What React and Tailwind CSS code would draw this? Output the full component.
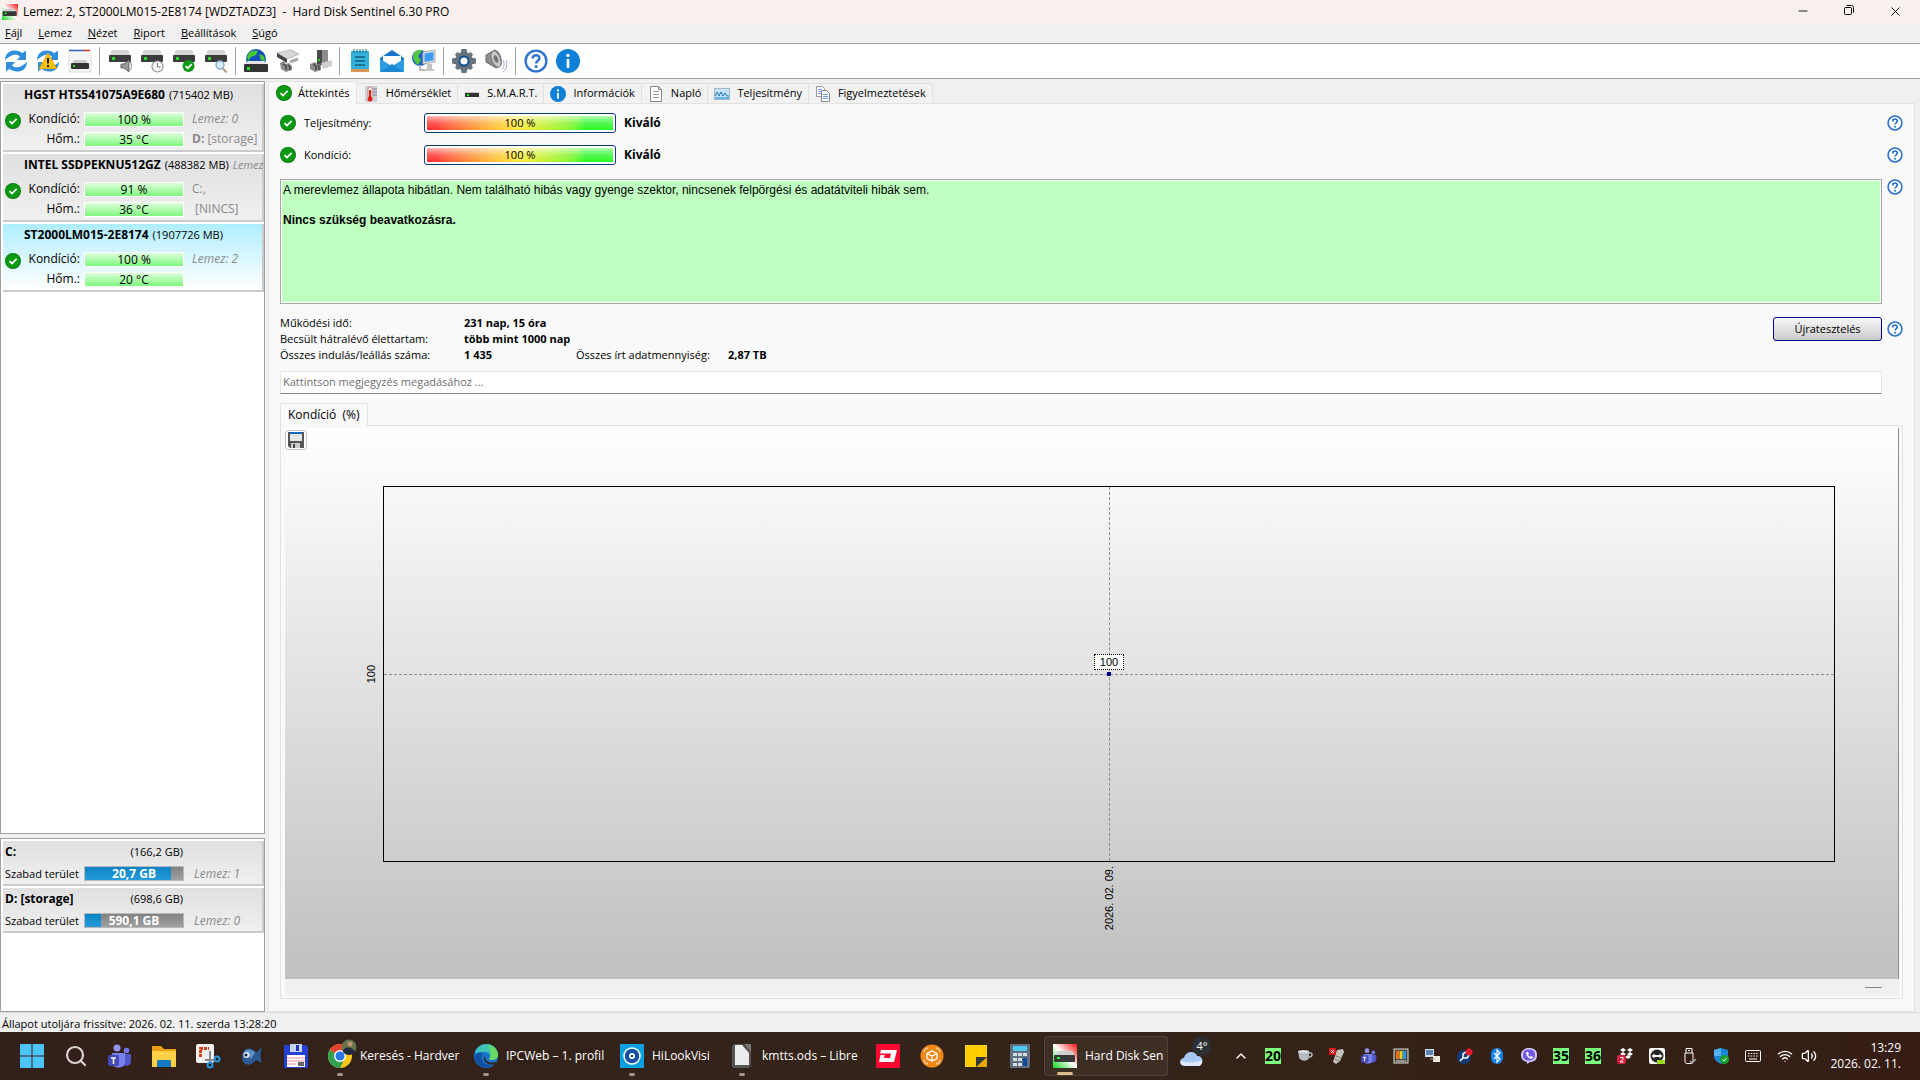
import { ChevronUp, Minus, Search, Volume2, Wifi, X } from "lucide-react";

const disks = [
  {
    name: "HGST HTS541075A9E680",
    size: "(715402 MB)",
    health: "100 %",
    temp: "35 °C",
    note: "Lemez: 0",
    letter: "D:",
    label: "[storage]",
  },
  {
    name: "INTEL SSDPEKNU512GZ",
    size: "(488382 MB)",
    extra: "Lemez",
    health: "91 %",
    temp: "36 °C",
    drive: "C:,",
    label: " [NINCS]",
  },
  {
    name: "ST2000LM015-2E8174",
    size: "(1907726 MB)",
    health: "100 %",
    temp: "20 °C",
    note: "Lemez: 2",
    selected: true,
  },
];

const partitions = [
  { name: "C:", size: "(166,2 GB)", free: "20,7 GB", used: 88, note: "Lemez: 1" },
  { name: "D: [storage]", size: "(698,6 GB)", free: "590,1 GB", used: 16, note: "Lemez: 0" },
];

const menu = ["Fájl", "Lemez", "Nézet", "Riport", "Beállítások", "Súgó"];

/* ---------- icons ---------- */

const AppIcon = ({ className }) => (
  <svg viewBox="0 0 24 24" className={className}>
    <defs>
      <linearGradient id="appBg" x1="1" y1="0" x2="0" y2="1">
        <stop offset="0" stopColor="#ff1010" />
        <stop offset=".5" stopColor="#fff" />
        <stop offset="1" stopColor="#10d820" />
      </linearGradient>
    </defs>
    <rect width="24" height="24" fill="url(#appBg)" />
    <path d="M5 7h14l3 5H2z" fill="#d0d0d0" />
    <rect x="1" y="11" width="21" height="7" rx="1" fill="#383838" />
    <rect x="4" y="13" width="3" height="2" fill="#2f2" />
  </svg>
);

const CheckIcon = () => (
  <svg viewBox="0 0 16 16" className="size-4 shrink-0">
    <circle cx="8" cy="8" r="8" fill="#067a0c" />
    <circle cx="8" cy="8" r="7" fill="#0c9a12" />
    <path d="M4.500 8.200l2.500 2.300 4.600-4.600" fill="none" stroke="#fff" strokeWidth="1.700" />
  </svg>
);

const HelpIcon = ({ className = "size-4" }) => (
  <svg viewBox="0 0 24 24" className={className} fill="none" stroke="#2f72d0">
    <circle cx="12" cy="12" r="10.400" strokeWidth="2.400" fill="#fff" />
    <path d="M8.600 9.600c0-4.600 7-4.400 6.800-.4-.1 2.600-3.300 2.500-3.300 5.200" strokeWidth="2.500" />
    <circle cx="12.100" cy="17.600" r="1.500" fill="#2f72d0" stroke="none" />
  </svg>
);

const InfoIcon = ({ className = "size-4" }) => (
  <svg viewBox="0 0 24 24" className={className}>
    <circle cx="12" cy="12" r="12" fill="#0f80d8" />
    <circle cx="12" cy="6.500" r="1.700" fill="#fff" />
    <path d="M12 10v9" stroke="#fff" strokeWidth="2.600" />
  </svg>
);

const Arrows = () => (
  <g fill="#2f8fdc">
    <path d="M1 11C1.500 4 5.500 1.500 11 1.500c3 0 5.500 1 7.300 2.800L22 1.500V11h-9l3-3.400C14.500 6 12.500 5.500 10.500 5.800 7 6.200 4.500 8 1 11z" />
    <path d="M23 13c-.5 7-4.500 9.500-10 9.500-3 0-5.500-1-7.300-2.800L2 22.500V13h9l-3 3.400c1.500 1.600 3.500 2.100 5.500 1.800 3.500-.4 6-2.200 9.500-5.200z" />
  </g>
);

const Disk = () => (
  <g>
    <path d="M4 1h16l3 6H1z" fill="#d4d4d4" />
    <rect x="1" y="6" width="22" height="7" rx="1" fill="#3c3c3c" />
    <rect x="4" y="8" width="3" height="3" fill="#22e022" />
  </g>
);

const toolbar = [
  [
    { title: "Frissítés", art: <Arrows /> },
    {
      title: "Figyelmeztetés",
      art: (
        <>
          <Arrows />
          <path d="M12 4l8.500 15.500h-17z" fill="#ffc20a" stroke="#f0a800" strokeLinejoin="round" />
          <path d="M12 9v5.500" stroke="#222" strokeWidth="2" />
          <circle cx="12" cy="17" r="1.200" fill="#222" />
        </>
      ),
    },
    {
      title: "Jelentés",
      art: (
        <>
          <rect x="1" y="1" width="22" height="22" fill="#f4f4f4" stroke="#e0e0e0" />
          <path d="M1 1.500h14" stroke="#2f6fb8" strokeWidth="1.500" />
          <path d="M15 1.500h7" stroke="#c8402c" strokeWidth="1.500" />
          <path d="M6 11h12l2 4H4z" fill="#c8c8c8" />
          <rect x="3" y="14" width="18" height="6" rx="1" fill="#333" />
          <rect x="5" y="16" width="2" height="2" fill="#2e2" />
        </>
      ),
    },
  ],
  [
    {
      title: "Hangteszt",
      art: (
        <>
          <Disk />
          <path d="M13 15h3l5-4v12l-5-4h-3z" fill="#9a9a9a" stroke="#666" />
          <path d="M22.500 13c1.500 3 1 6 0 8" fill="none" stroke="#8c8c8c" />
        </>
      ),
    },
    {
      title: "Ütemezés",
      art: (
        <>
          <Disk />
          <circle cx="17.500" cy="17.500" r="5.500" fill="#f6f6f6" stroke="#999" strokeWidth="1.200" />
          <path d="M17.500 14v4h3" fill="none" stroke="#777" />
        </>
      ),
    },
    {
      title: "Teszt",
      art: (
        <>
          <Disk />
          <circle cx="16.500" cy="17" r="6" fill="#0f9a18" />
          <path d="M13.500 17l2.300 2.200 4-4" fill="none" stroke="#fff" strokeWidth="1.700" />
        </>
      ),
    },
    {
      title: "Keresés",
      art: (
        <>
          <Disk />
          <path d="M18.500 19l4 4.500" stroke="#b89878" strokeWidth="2" />
          <circle cx="16" cy="16" r="4" fill="#d8eefc" stroke="#8ab0cc" strokeWidth="1.500" />
        </>
      ),
    },
  ],
  [
    {
      title: "Hálózat",
      art: (
        <>
          <circle cx="12" cy="10" r="10" fill="#1450b8" />
          <path d="M5 4c3-3 7-3 9-2l-2 4-5 2-3 4c-1-3-1-6 1-8zM15 5l5 2 1 5-4-1z" fill="#46c832" />
          <path d="M4 12h16l4 4H0z" fill="#e4e4e4" />
          <rect y="15" width="24" height="8" rx="1" fill="#333" />
          <rect x="3" y="18" width="3" height="3" fill="#2e2" />
        </>
      ),
    },
    {
      title: "Csatlakoztatás",
      art: (
        <>
          <path d="M1 4l14-3 8 4-12 5z" fill="#d8d8d8" stroke="#b4b4b4" />
          <path d="M1 4l10 6v4L1 8z" fill="#444" />
          <path d="M14 13l8-3" stroke="#aaa" strokeWidth="3" />
          <path d="M4 14l4-2 2 3 3-1 3 3v4l-6 2-5-3z" fill="#8c8c8c" />
          <path d="M7 15l3 2v4M12 16l2 2v3" fill="none" stroke="#444" strokeWidth="1.500" />
        </>
      ),
    },
    {
      title: "Leválasztás",
      art: (
        <>
          <path d="M9 1h9l2 2v13H9z" fill="#4a4a4a" />
          <path d="M14 1h6v14h-6z" fill="#8c8c8c" />
          <path d="M13 14l11-3v6l-9 3z" fill="#cecece" />
          <path d="M2 15l5-2 3 2 3 1v5l-6 2-5-3z" fill="#8c8c8c" />
          <path d="M5 15l3 2v4M10 16l1 2v3" fill="none" stroke="#444" strokeWidth="1.500" />
          <rect x="10" y="10" width="2" height="2" fill="#2d2" />
        </>
      ),
    },
  ],
  [
    {
      title: "Napló",
      art: (
        <>
          <rect x="3" y="2" width="18" height="19" fill="#35b2dc" />
          <rect x="3" y="20" width="18" height="3" fill="#d8965a" />
          <path d="M6 0v4m3-4v4m3-4v4m3-4v4m3-4v4" stroke="#1c6484" />
          <path d="M7 8h10M7 12h10M7 16h10" stroke="#14607e" strokeWidth="1.500" />
        </>
      ),
    },
    {
      title: "E-mail",
      art: (
        <>
          <path d="M0 9l12-8 12 8v14H0z" fill="#1678c8" />
          <path d="M3 7h18v7l-9 5-9-5z" fill="#fff" />
          <path d="M0 10l12 7 12-7v13H0z" fill="#2b9be4" />
          <path d="M0 23l12-8 12 8z" fill="#1c86d4" />
        </>
      ),
    },
    {
      title: "Távoli gép",
      art: (
        <>
          <circle cx="8" cy="9" r="8" fill="#2060c8" />
          <path d="M2 4c3-4 7-4 8-2L6 7l3 4-3 5C1 12 0 8 2 4z" fill="#54c83c" />
          <path d="M11 3l12-2v12l-12 2z" fill="#e2e2e2" stroke="#aaa" />
          <path d="M12.500 4.500l9-1.500v8.500l-9 1.500z" fill="#3c9cf0" />
          <path d="M15 15h5v4l3 3H12l3-3z" fill="#c4c4c4" />
          <path d="M8 16v5h5" fill="none" stroke="#b8b8b8" strokeWidth="2" />
        </>
      ),
    },
  ],
  [
    {
      title: "Beállítások",
      art: (
        <>
          <g fill="#66727e">
            <circle cx="12" cy="12" r="9" />
            <path d="M9.500 0h5l1 5h-7zM9.500 24h5l1-5h-7zM0 9.500v5l5 1v-7zM24 9.500v5l-5 1v-7z" />
            <path d="M3 5.500L5.500 3l4 2.500-4 4zM21 5.500L18.500 3l-4 2.500 4 4zM3 18.500L5.500 21l4-2.500-4-4zM21 18.500L18.500 21l-4-2.500 4-4z" />
          </g>
          <circle cx="12" cy="12" r="5.500" fill="#0e4c8c" />
          <circle cx="12" cy="12" r="3.600" fill="#fff" />
        </>
      ),
    },
    {
      title: "Hang",
      art: (
        <>
          <path d="M2 6L11 1c5 2 7 9 6 15l-5 3-10-6z" fill="#8e8e8e" stroke="#666" />
          <ellipse cx="12" cy="10" rx="4.500" ry="8.500" transform="rotate(-20 12 10)" fill="#c8c8c8" stroke="#777" />
          <ellipse cx="12" cy="10" rx="2" ry="4" transform="rotate(-20 12 10)" fill="#777" />
          <path d="M19 11c2 4 1 7-1 9M22 11c2 5 0 10-3 12" fill="none" stroke="#a8a8d0" />
        </>
      ),
    },
  ],
];

const ToolIcon = ({ children }) => (
  <svg viewBox="0 0 24 24" className="size-6">
    {children}
  </svg>
);

const TabIcon = ({ children }) => (
  <svg viewBox="0 0 16 16" className="size-4 shrink-0">
    {children}
  </svg>
);

const tabs = [
  {
    label: "Hőmérséklet",
    icon: (
      <TabIcon>
        <rect x="2" width="12" height="16" fill="#ccd2d8" />
        <path d="M10 3h4M10 6h4M10 9h4" stroke="#778" />
        <rect x="5" y="1" width="4" height="11" rx="2" fill="#fff" stroke="#c88" />
        <path d="M7 4v9" stroke="#e02010" strokeWidth="2" />
        <circle cx="7" cy="13" r="2.500" fill="#e02010" />
      </TabIcon>
    ),
  },
  {
    label: "S.M.A.R.T.",
    icon: (
      <TabIcon>
        <path d="M2 6h12l1 1H1z" fill="#c4c4c4" />
        <rect x="1" y="7" width="14" height="4" fill="#333" />
        <rect x="3" y="8" width="2" height="2" fill="#2e2" />
      </TabIcon>
    ),
  },
  { label: "Információk", icon: <InfoIcon /> },
  {
    label: "Napló",
    icon: (
      <TabIcon>
        <path d="M2.500.5h8l3 3v12h-11z" fill="#fff" stroke="#888" />
        <path d="M10.500.5v3h3" fill="none" stroke="#888" />
        <path d="M5 5.500h6M5 8.500h6M5 11.500h6" stroke="#999" />
      </TabIcon>
    ),
  },
  {
    label: "Teljesítmény",
    icon: (
      <TabIcon>
        <rect x=".5" y="2.500" width="15" height="11" fill="#c4e4fa" stroke="#a4b8c8" />
        <path d="M1 11h14v2H1z" fill="#68b4ec" />
        <path d="M1 10l2-4 2 4 2-4 2 4 2-3 2 3h2" fill="none" stroke="#2478c0" />
      </TabIcon>
    ),
  },
  {
    label: "Figyelmeztetések",
    icon: (
      <TabIcon>
        <path d="M1.500.5h6l2 2v8h-8z" fill="#fff" stroke="#999" />
        <path d="M3 3.500h4M3 5.500h4M3 7.500h4" stroke="#6ca0e8" />
        <path d="M6.500 4.500h5l3 3v8h-8z" fill="#fff" stroke="#888" />
        <path d="M8 8.500h5M8 10.500h5M8 12.500h5" stroke="#6ca0e8" />
      </TabIcon>
    ),
  },
];

/* ---------- left column ---------- */

const GreenBar = ({ children }) => (
  <div className="w-[100px] h-[15px] border border-white bg-linear-to-b from-[#dcffdc] to-[#7cf77c] text-center leading-[13px]">
    {children}
  </div>
);

const DiskCard = ({ disk }) => (
  <button
    className={
      "block w-full h-[68px] pt-[2px] text-left border-r-2 border-b-2 border-[#cbcbcb] " +
      (disk.selected
        ? "bg-linear-to-b from-[#aeeeff] to-white"
        : "bg-linear-to-b from-[#e0e0e0] to-[#f0f0f0]")
    }
  >
    <div className="flex items-center gap-1 pl-[21px] h-4 leading-4 whitespace-nowrap text-[11px]">
      <b className="text-xs">{disk.name}</b>
      <span>{disk.size}</span>
      {disk.extra && <i className="text-[#8a8a8a]">{disk.extra}</i>}
    </div>
    <div className="flex pt-[6px]">
      <div className="w-6 pl-[2px] pt-1">
        <CheckIcon />
      </div>
      <div className="grid grid-cols-[53px_100px_auto] gap-x-1 leading-5 whitespace-nowrap items-center">
        <span className="text-right">Kondíció:</span>
        <GreenBar>{disk.health}</GreenBar>
        <span className="pl-1 text-[#8a8a8a]">
          {disk.note ? <i>{disk.note}</i> : disk.drive}
        </span>
        <span className="text-right">Hőm.:</span>
        <GreenBar>{disk.temp}</GreenBar>
        <span className="pl-1 text-[#8a8a8a] whitespace-pre">
          {disk.letter && <b>{disk.letter} </b>}
          {disk.label}
        </span>
      </div>
    </div>
  </button>
);

const PartitionCard = ({ part }) => (
  <button className="block w-full h-[45px] pl-[2px] text-left border-r-2 border-b-2 border-[#cbcbcb] bg-linear-to-b from-[#e0e0e0] to-[#f0f0f0]">
    <div className="flex justify-between w-[178px] h-[22px] leading-[22px]">
      <b>{part.name}</b>
      <span className="text-[11px]">{part.size}</span>
    </div>
    <div className="flex items-center h-[21px] leading-5 whitespace-nowrap">
      <span className="w-[79px] text-[11px]">Szabad terület</span>
      <div className="relative w-[100px] h-[15px] border border-[#b8b8b8] bg-linear-to-b from-[#828282] to-[#a0a0a0]">
        <div
          className="h-full bg-linear-to-b from-[#0a84c4] to-[#249cdc]"
          style={{ width: part.used + "%" }}
        />
        <b className="absolute inset-0 text-center text-white leading-[13px]">{part.free}</b>
      </div>
      <i className="pl-[10px] text-[#8a8a8a]">{part.note}</i>
    </div>
  </button>
);

const Sidebar = () => (
  <aside className="flex flex-col gap-1 w-[265px] shrink-0 pt-[2px]">
    <div className="flex flex-col flex-1 gap-[2px] p-[2px] pr-0 bg-white border border-[#a0a0a0]">
      {disks.map((disk) => (
        <DiskCard key={disk.name} disk={disk} />
      ))}
    </div>
    <div className="flex flex-col gap-[2px] h-[174px] p-[2px] pr-0 bg-white border border-[#a0a0a0]">
      {partitions.map((part) => (
        <PartitionCard key={part.name} part={part} />
      ))}
    </div>
  </aside>
);

/* ---------- main panel ---------- */

const Meter = ({ label }) => (
  <div className="flex items-center h-8">
    <CheckIcon />
    <span className="w-32 pl-2">{label}</span>
    <div className="w-48 h-5 p-[2px] bg-white border border-[#0a3a78] rounded-[3px]">
      <div className="h-full bg-linear-to-r from-[#ff3030] from-5% via-[#ffe838] via-48% to-[#28f828] to-85%">
        <div className="h-full text-center leading-[14px] bg-linear-to-b from-white/65 via-white/20 to-transparent">
          100 %
        </div>
      </div>
    </div>
    <b className="pl-2 text-xs">Kiváló</b>
    <button aria-label="Súgó" className="ml-auto">
      <HelpIcon />
    </button>
  </div>
);

const HealthChart = () => (
  <div className="flex flex-col flex-1 font-['Liberation_Sans',Arial,sans-serif] bg-linear-to-b from-white to-[#c0c0c0] border-r border-[#8c8c8c]">
    <div className="h-[58px] pt-[2px]">
      <button
        aria-label="Mentés"
        className="flex items-center justify-center w-[22px] h-5 bg-white border border-[#c4c4c4] rounded-[3px]"
      >
        <svg viewBox="0 0 16 16" className="size-4">
          <path d="M0 0h16v16H2l-2-2z" fill="#555" />
          <rect x="2" width="12" height="2" fill="#0a68c0" />
          <rect x="2" y="2" width="12" height="7" fill="#e4e4e4" />
          <rect x="3" y="11" width="9" height="5" fill="#ccc" />
          <rect x="5" y="12" width="2" height="4" fill="#444" />
        </svg>
      </button>
    </div>
    <div className="flex flex-1 pr-[63px]">
      <div className="flex items-center justify-end w-[98px] pr-1">
        <span className="[writing-mode:vertical-rl] rotate-180">100</span>
      </div>
      <div className="relative flex-1 border border-black">
        <div className="absolute inset-x-0 top-1/2 border-t border-dashed border-[#8c8c8c]" />
        <div className="absolute inset-y-0 left-1/2 border-l border-dashed border-[#8c8c8c]" />
        <div className="absolute size-1 -translate-x-1/2 -translate-y-1/2 bg-[#000080] top-1/2 left-1/2" />
        <div className="absolute w-[30px] h-4 mb-1 text-center leading-[14px] -translate-x-1/2 bg-white border border-black border-dotted bottom-1/2 left-1/2">
          100
        </div>
      </div>
    </div>
    <div className="flex justify-center h-[117px] pl-[98px] pr-[63px] pt-1">
      <span className="[writing-mode:vertical-rl] rotate-180 self-start">2026. 02. 09.</span>
    </div>
  </div>
);

const Overview = () => (
  <section className="flex flex-col flex-1 pt-[3px] pb-3 px-[11px] text-[11px] bg-[#f9f9f9] border border-[#e2e2e2]">
    <div>
      <Meter label="Teljesítmény:" />
      <Meter label="Kondíció:" />
    </div>
    <div className="flex items-start gap-[5px] pt-2">
      <div className="flex-1 h-[125px] p-[2px] text-xs leading-[15px] font-['Liberation_Sans',Arial,sans-serif] bg-[#bfffbf] border border-[#a6a6a6] outline-1 -outline-offset-2 outline-white">
        <p className="pt-px">
          A merevlemez állapota hibátlan. Nem található hibás vagy gyenge szektor, nincsenek
          felpörgési és adatátviteli hibák sem.
        </p>
        <p className="pt-[15px] font-bold">Nincs szükség beavatkozásra.</p>
      </div>
      <button aria-label="Súgó">
        <HelpIcon />
      </button>
    </div>
    <div className="flex items-start pt-[11px]">
      <dl className="grid grid-cols-[184px_112px_152px_auto] leading-4 whitespace-nowrap">
        <dt>Működési idő:</dt>
        <dd className="col-span-3 font-bold">231 nap, 15 óra</dd>
        <dt>Becsült hátralévő élettartam:</dt>
        <dd className="col-span-3 font-bold">több mint 1000 nap</dd>
        <dt>Összes indulás/leállás száma:</dt>
        <dd className="font-bold">1 435</dd>
        <dt>Összes írt adatmennyiség:</dt>
        <dd className="font-bold">2,87 TB</dd>
      </dl>
      <div className="flex items-center gap-[5px] ml-auto pt-[2px]">
        <button className="w-[109px] h-6 bg-linear-to-b from-[#f8f8f8] to-[#cacaca] border border-[#000080] rounded-[3px]">
          Újratesztelés
        </button>
        <button aria-label="Súgó">
          <HelpIcon />
        </button>
      </div>
    </div>
    <div className="pr-[21px] pt-2">
      <input
        aria-label="Megjegyzés"
        placeholder="Kattintson megjegyzés megadásához ..."
        className="block w-full h-[23px] px-[2px] pb-[2px] bg-white border border-[#e6e6e6] border-b-[#868686] placeholder:text-[#6e6e6e]"
      />
    </div>
    <div className="pt-[9px]">
      <button className="relative z-10 block h-[23px] px-[7px] -mb-px text-xs whitespace-pre bg-[#f9f9f9] border border-b-0 border-[#e2e2e2]">
        Kondíció  (%)
      </button>
    </div>
    <div className="flex flex-col flex-1 pl-1 pr-[3px] py-[2px] border border-[#e2e2e2]">
      <HealthChart />
      <div className="flex items-center justify-end h-[17px] pr-[17px] bg-[#f0f0f0]">
        <div className="w-[17px] h-px bg-[#868686]" />
      </div>
    </div>
  </section>
);

/* ---------- taskbar ---------- */

const TeamsArt = () => (
  <>
    <circle cx="9" cy="4" r="3.500" fill="#9098f8" />
    <circle cx="18.500" cy="6.500" r="2.800" fill="#7078e8" />
    <path d="M13 10h10v7c0 6-8 6-9 2z" fill="#5058c8" />
    <path d="M4 9h13v10c0 6-13 6-13 0z" fill="#7880f0" />
    <rect y="11" width="11" height="11" rx="2" fill="#4648b4" />
    <path d="M3 14h5M5.500 14v6" stroke="#fff" strokeWidth="1.500" />
  </>
);

const apps = [
  {
    name: "Start",
    art: (
      <path d="M0 0h11.500v11.500H0zM12.500 0H24v11.500H12.500zM0 12.500h11.500V24H0zM12.500 12.500H24V24H12.500z" fill="#4cc4fa" />
    ),
  },
  {
    name: "Keresés",
    art: <Search size={24} color="#dcd4d0" strokeWidth={2.2} />,
  },
  { name: "Teams", art: <TeamsArt /> },
  {
    name: "Fájlkezelő",
    art: (
      <>
        <path d="M0 2h9l3 3h12v18H0z" fill="#e8a010" />
        <path d="M0 7h24v16H0z" fill="#ffd048" />
        <path d="M5 23v-5c0-2 1-2 2-2h10c1 0 2 0 2 2v5z" fill="#1478c0" />
      </>
    ),
  },
  {
    name: "Képmetsző",
    art: (
      <>
        <rect width="18" height="19" rx="2" fill="#f0f0f0" />
        <path d="M4.500 13V4.500H13" fill="none" stroke="#d83c10" strokeWidth="3" strokeDasharray="3 1" />
        <path d="M14 7v11M9 16h9" stroke="#888" strokeWidth="2" />
        <circle cx="14" cy="21" r="2.500" fill="none" stroke="#2498e0" strokeWidth="2" />
        <circle cx="21" cy="15" r="2.500" fill="none" stroke="#2498e0" strokeWidth="2" />
      </>
    ),
  },
  {
    name: "Hal",
    art: (
      <>
        <path d="M2 13c0-10 10-11 14-4l6-6c-2 6-2 10 0 16l-6-3C10 24 2 21 2 13z" fill="#2c5a94" />
        <path d="M4 8c3-4 9-3 11 1l-4 6z" fill="#5a90c4" />
        <circle cx="6.500" cy="11" r="3" fill="#e4eef4" />
        <circle cx="6" cy="11" r="1.500" fill="#123" />
      </>
    ),
  },
  {
    name: "Lemezkezelő",
    art: (
      <>
        <path d="M0 1h22l2 2v21H0z" fill="#2440d0" />
        <rect x="6" width="12" height="8" fill="#c4d4f0" />
        <rect x="12" y="1" width="3" height="6" fill="#2038b0" />
        <rect x="3" y="11" width="18" height="12" fill="#fff" />
        <path d="M3 14h18M3 17h18M3 20h9" stroke="#e89090" />
        <path d="M14 18h6v4h-6z" fill="#666" />
      </>
    ),
  },
  {
    name: "Chrome",
    label: "Keresés - Hardver",
    art: (
      <>
        <circle cx="12" cy="12" r="12" fill="#fcc818" />
        <path d="M12 12L1.600 6A12 12 0 0 1 22.400 6z" fill="#e84030" />
        <path d="M12 12L1.600 6A12 12 0 0 0 12 24l4-8z" fill="#30a050" />
        <circle cx="12" cy="12" r="6" fill="#fff" />
        <circle cx="12" cy="12" r="4.600" fill="#2878e8" />
        <circle cx="21" cy="3" r="7.500" fill="#66744c" />
        <circle cx="22" cy="0" r="2.500" fill="#c49474" />
        <path d="M15 8c0-6 10-6 12 0-3 4-9 4-12 0z" fill="#20283c" />
      </>
    ),
  },
  {
    name: "Edge",
    label: "IPCWeb – 1. profil",
    art: (
      <>
        <circle cx="12" cy="12" r="12" fill="#1874cc" />
        <path d="M1 9C4-3 22-3 24 10c0 6-6 7-9 5 3-4-1-8-6-7-4 0-7 1-8 1z" fill="#3cc4b8" />
        <path d="M14 1c6 1 10 5 10 10 0 5-6 6-9 4 3-4 2-8-1-14z" fill="#68d860" />
        <path d="M9 9c-4 5 0 13 9 12-8 6-17 0-17-8 0-3 4-5 8-4z" fill="#1050a0" />
        <path d="M11 11c-1 6 4 9 11 7l1 2c-8 3-16-3-12-9z" fill="#33241a" />
      </>
    ),
  },
  {
    name: "HiLook",
    label: "HiLookVisi",
    narrow: true,
    art: (
      <>
        <rect width="24" height="24" fill="#0ca0e0" />
        <circle cx="12" cy="12" r="8" fill="#1850a0" stroke="#fff" strokeWidth="1.500" />
        <circle cx="12" cy="12" r="3" fill="#fff" />
        <circle cx="12" cy="12" r="1.300" fill="#1850a0" />
      </>
    ),
  },
  {
    name: "LibreOffice",
    label: "kmtts.ods – Libre",
    art: (
      <>
        <path d="M4 0h9l8 8v13l-2 3H4l-2-2V2z" fill="#555" />
        <path d="M5 1h7l7 8v12H5z" fill="#ececec" />
        <path d="M14 0h7v8z" fill="#777" />
      </>
    ),
  },
  {
    name: "DriveThrough",
    art: (
      <>
        <rect width="24" height="24" fill="#fa0830" />
        <path d="M5 6h16l-3 12H3l1.500-7h4L8 14h6l1-4.500H4z" fill="#fff" />
      </>
    ),
  },
  {
    name: "Csomag",
    art: (
      <>
        <circle cx="12" cy="12" r="11.500" fill="#f08818" />
        <path d="M12 7l5 2.500v5L12 17l-5-2.500v-5zM7 9.500l5 2.500 5-2.500M12 12v5" fill="none" stroke="#fff" strokeWidth="1.300" />
        <path d="M4 8c0-2 2-4 4-4M16 4c2 0 4 2 4 4M4 16c0 2 2 4 4 4M16 20c2 0 4-2 4-4" fill="none" stroke="#fff" />
      </>
    ),
  },
  {
    name: "Jegyzetek",
    art: (
      <>
        <path d="M1 1h22v12L12 23H1z" fill="#ffd000" />
        <path d="M12 13h11v10H12z" fill="#e0a800" />
        <path d="M12 13h11L12 23z" fill="#303840" />
      </>
    ),
  },
  {
    name: "Számológép",
    art: (
      <>
        <rect x="2" width="20" height="24" rx="1" fill="#607080" />
        <rect x="5" y="2" width="14" height="5" fill="#50c8f0" />
        <path d="M5 10.500h14M5 15.500h9M5 20.500h9" stroke="#d4dce4" strokeWidth="3" strokeDasharray="4 1" />
        <rect x="15" y="14" width="4" height="8" fill="#1048a0" />
      </>
    ),
  },
];

const appWidth = (app) => {
  if (!app.label) return "w-11";
  return app.narrow ? "w-[110px]" : "w-[146px]";
};

const NumberTile = ({ children }) => (
  <b className="w-4 h-4 text-sm leading-4 text-center text-black bg-[#7cff7c]">{children}</b>
);

const TrayIcon = ({ children }) => (
  <svg viewBox="0 0 16 16" className="size-4">
    {children}
  </svg>
);

const tray = [
  <ChevronUp size={16} color="#fff" />,
  <NumberTile>20</NumberTile>,
  <TrayIcon>
    <path d="M1 3h11v6c0 5-9 5-10 0z" fill="#b4bac0" />
    <path d="M12 5c4-1 4 4 0 4" fill="none" stroke="#b4bac0" strokeWidth="1.500" />
    <ellipse cx="6.500" cy="3.500" rx="5.500" ry="1.500" fill="#dce0e4" />
  </TrayIcon>,
  <TrayIcon>
    <path d="M8 2l6-1 1 3-4 9-4 3-3-2 2-6z" fill="#c4c4bc" />
    <path d="M7 8l5 2M6 11l4 2" stroke="#777" />
    <rect width="7" height="7" fill="#d81c18" />
    <path d="M2 2l3 3m0-3L2 5" stroke="#fff" />
  </TrayIcon>,
  <svg viewBox="0 0 24 24" className="size-4">
    <TeamsArt />
  </svg>,
  <TrayIcon>
    <rect x="1" y="1" width="14" height="14" fill="#484848" stroke="#e4e0d0" />
    <path d="M4.500 3v8" stroke="#f06818" strokeWidth="3" />
    <path d="M8 3v8" stroke="#e8d020" strokeWidth="3" />
    <path d="M11.500 3v8" stroke="#2898e0" strokeWidth="3" />
    <path d="M3 13h10" stroke="#ddd" />
  </TrayIcon>,
  <TrayIcon>
    <rect x="0" y="1" width="9" height="8" fill="#d4dce4" />
    <rect x="1" y="2" width="7" height="5" fill="#5c84b8" />
    <path d="M8 8h7v6H8z" fill="#ece8dc" />
    <path d="M5 11h5" stroke="#aaa" />
  </TrayIcon>,
  <TrayIcon>
    <circle cx="7" cy="9" r="7" fill="#123c78" />
    <path d="M3 13l3-3 4 0 2-3-3-3-3 2v4" fill="none" stroke="#fff" strokeWidth="1.500" />
    <circle cx="12" cy="4" r="3.500" fill="#e01c28" />
  </TrayIcon>,
  <TrayIcon>
    <rect x="2" width="12" height="16" rx="6" fill="#1480e8" />
    <path d="M5 5l6 6-3 3V2l3 3-6 6" fill="none" stroke="#fff" strokeWidth="1.200" />
  </TrayIcon>,
  <TrayIcon>
    <path d="M8 0c5 0 8 2 8 7s-3 7-7 7l-3 2v-2C2 13 0 11 0 7s3-7 8-7z" fill="#d4ccff" />
    <path d="M8 1.500c4 0 6 2 6 5.500s-2 5.500-6 5.500S2 11 2 7s2-5.500 6-5.500z" fill="#7058e0" />
    <path d="M5 4c0 4 3 7 6 7l1-2-2-1-1 1-2-2 1-1-1-2z" fill="#fff" />
  </TrayIcon>,
  <NumberTile>35</NumberTile>,
  <NumberTile>36</NumberTile>,
  <TrayIcon>
    <path d="M3 2l3-2 3 2-3 2zM10 2l3-2 3 2-3 2zM10 6l3-2 3 2-3 2zM3 6l3-2 3 2-3 2zM8 9l3-2 3 2-3 2z" fill="#fff" />
    <rect y="7" width="9" height="9" rx="2" fill="#d82038" />
    <path d="M3 9.500h3v2L3 14h3.500" fill="none" stroke="#fff" />
  </TrayIcon>,
  <TrayIcon>
    <rect width="16" height="16" rx="2" fill="#fff" />
    <circle cx="8" cy="8" r="6.500" fill="#222" />
    <path d="M2.500 8l3-2.500v1.500h5V5.500l3 2.500-3 2.500V9h-5v1.500z" fill="#fff" />
    <rect x="8" y="12" width="8" height="4" fill="#9cd820" />
  </TrayIcon>,
  <TrayIcon>
    <path d="M5 5V.500h6V5M4 5h8v8.500c0 2-2 2-2 2H6s-2 0-2-2zM7 2.500h2" fill="none" stroke="#fff" />
    <path d="M9 13l2 2 4-4" fill="none" stroke="#aaa" strokeWidth="1.500" />
  </TrayIcon>,
  <TrayIcon>
    <path d="M8 0l7 2v6c0 4-3 6-7 8-4-2-7-4-7-8V2z" fill="#1c84d8" />
    <path d="M8 0v8H1V2z" fill="#50b4f0" />
    <circle cx="11.500" cy="11.500" r="4.500" fill="#18a028" />
    <path d="M9.500 11.500l1.500 1.500 2.500-3" fill="none" stroke="#fff" />
  </TrayIcon>,
  <TrayIcon>
    <rect x=".5" y="2.500" width="15" height="11" rx="1" fill="none" stroke="#fff" />
    <path d="M3 5.500h10M3 8h10" stroke="#fff" strokeDasharray="1.500 1.200" />
    <path d="M4 11h8" stroke="#fff" />
  </TrayIcon>,
];

const Taskbar = () => (
  <footer className="flex items-center h-12 pl-[10px] pr-[19px] text-xs text-white bg-linear-to-r from-[#34201a] via-[#33241a] to-[#351d14]">
    {apps.map((app) => (
      <button
        key={app.name}
        aria-label={app.name}
        className={"relative flex items-center h-full pl-[10px] gap-2 whitespace-nowrap " + appWidth(app)}
      >
        <svg viewBox="0 0 24 24" className="overflow-visible size-6 shrink-0">
          {app.art}
        </svg>
        {app.label}
        {app.label && (
          <span className="absolute bottom-1 left-[19px] w-[6px] h-[3px] rounded bg-[#a09890]" />
        )}
      </button>
    ))}
    <button className="relative flex items-center w-[124px] h-10 gap-2 pl-2 ml-[2px] whitespace-nowrap border border-white/10 rounded bg-white/5">
      <AppIcon className="size-6 shrink-0" />
      Hard Disk Sen
      <span className="absolute bottom-0 left-3 w-4 h-[3px] rounded bg-[#dcbc88]" />
    </button>
    <button aria-label="Időjárás" className="relative w-9 h-full ml-3">
      <svg viewBox="0 0 32 32" className="size-8">
        <path d="M6 26c-8 0-7-8-2-8 2-8 12-7 13-2 7-1 7 10 1 10z" fill="#a8c8f4" />
        <path d="M6 26c-6 0-6-4-5-5 6 2 15 2 21-1 1 4-2 6-4 6z" fill="#dce8fc" />
      </svg>
      <span className="absolute right-1 w-5 h-5 text-[11px] leading-5 text-center rounded-full top-1 bg-[#2c3034]">
        4°
      </span>
    </button>
    <div className="flex items-center gap-4 ml-auto">
      {tray.map((icon, i) => (
        <button key={i} aria-label={"Tálca " + (i + 1)} className="flex items-center justify-center w-4">
          {icon}
        </button>
      ))}
      <button aria-label="Hálózat és hang" className="flex items-center gap-2">
        <Wifi size={16} />
        <Volume2 size={16} />
      </button>
    </div>
    <div className="w-[84px] leading-4 text-right">
      <div>13:29</div>
      <div>2026. 02. 11.</div>
    </div>
  </footer>
);

const App = () => {
  return (
    <div className="flex flex-col min-h-screen text-xs text-black bg-[#f0f0f0] font-['Open_Sans','Noto_Sans',sans-serif]">
      <header className="flex items-center h-[23px] px-[2px] bg-[#f9f0ee]">
        <AppIcon className="size-4" />
        <h1 className="pl-[5px] whitespace-pre">
          Lemez: 2, ST2000LM015-2E8174 [WDZTADZ3]  -  Hard Disk Sentinel 6.30 PRO
        </h1>
        <div className="flex ml-auto">
          <button aria-label="Kis méret" className="flex justify-center w-[46px]">
            <Minus size={14} strokeWidth={1.5} />
          </button>
          <button aria-label="Előző méret" className="flex justify-center w-[46px]">
            <svg viewBox="0 0 12 12" className="size-3" fill="none" stroke="#000">
              <rect x="1.500" y="3.500" width="7" height="7" rx="1" />
              <path d="M3.500 1.500h5c1 0 2 1 2 2v5" />
            </svg>
          </button>
          <button aria-label="Bezárás" className="flex justify-center w-[46px]">
            <X size={15} strokeWidth={1.5} />
          </button>
        </div>
      </header>
      <nav className="flex h-5 gap-4 pl-[5px] text-[11px]">
        {menu.map((item) => (
          <button key={item}>
            <u>{item[0]}</u>
            {item.slice(1)}
          </button>
        ))}
      </nav>
      <div className="flex items-center h-9 bg-white border-y border-[#a0a0a0]">
        {toolbar.map((group, i) => (
          <div key={i} className="flex items-center">
            {group.map((tool) => (
              <button key={tool.title} aria-label={tool.title} className="flex justify-center w-8">
                <ToolIcon>{tool.art}</ToolIcon>
              </button>
            ))}
            <span className="w-px h-7 mr-1 ml-[3px] bg-[#a0a0a0]" />
          </div>
        ))}
        <button aria-label="Súgó" className="flex justify-center w-8">
          <HelpIcon className="size-6" />
        </button>
        <button aria-label="Információ" className="flex justify-center w-8">
          <InfoIcon className="size-6" />
        </button>
      </div>
      <div className="flex flex-1">
        <Sidebar />
        <main className="flex flex-col flex-1 pl-[3px] pr-[5px] pt-px">
          <div className="flex items-end h-[23px] text-[11px]">
            <button className="relative z-10 flex items-center h-[23px] gap-[6px] pl-[7px] pr-[6px] -mb-px bg-[#f9f9f9] border border-b-0 border-[#e2e2e2]">
              <CheckIcon />
              Áttekintés
            </button>
            {tabs.map((tab) => (
              <button
                key={tab.label}
                className="flex items-center h-5 gap-[7px] pl-[6px] pr-[6px] border-t border-r border-[#e2e2e2] bg-[#f2f2f2]"
              >
                {tab.icon}
                {tab.label}
              </button>
            ))}
          </div>
          <Overview />
        </main>
      </div>
      <div className="h-5 pl-[2px] pt-px text-[11px] leading-[19px] border-t border-[#dcdcdc]">
        Állapot utoljára frissítve: 2026. 02. 11. szerda 13:28:20
      </div>
      <Taskbar />
    </div>
  );
};

export default App;
